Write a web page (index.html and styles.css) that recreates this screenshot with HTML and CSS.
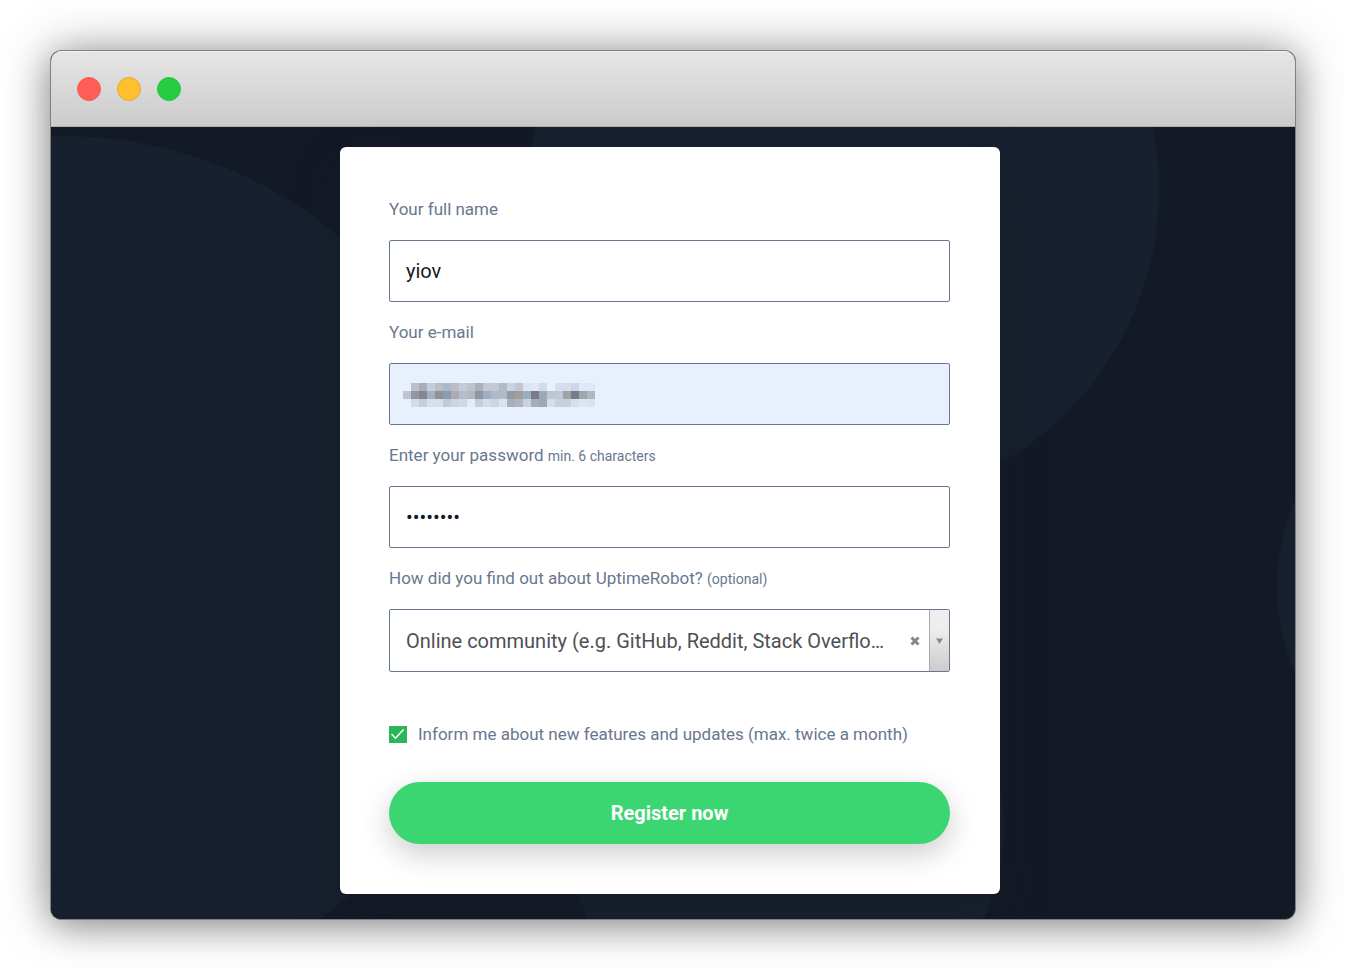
FILE: index.html
```html
<!DOCTYPE html>
<html lang="en">
<head>
<meta charset="utf-8">
<meta name="viewport" content="width=device-width, initial-scale=1">
<title>Register</title>
<link rel="stylesheet" href="styles.css">
</head>
<body>
<div class="window">
  <header class="titlebar">
    <button class="dot dot-close" type="button" aria-label="Close"></button>
    <button class="dot dot-minimize" type="button" aria-label="Minimize"></button>
    <button class="dot dot-zoom" type="button" aria-label="Zoom"></button>
  </header>
  <main class="page">
    <svg class="backdrop" viewBox="0 0 1244 792" preserveAspectRatio="xMidYMin slice" aria-hidden="true">
      <circle cx="11" cy="443" r="434"/>
      <circle cx="793" cy="63" r="315"/>
      <circle cx="1443" cy="460" r="217"/>
      <circle cx="735" cy="700" r="218"/>
    </svg>
    <form class="card">
      <div class="field">
        <label class="label" for="name">Your full name</label>
        <input class="input" id="name" type="text" value="yiov">
      </div>
      <div class="field">
        <label class="label" for="email">Your e-mail</label>
        <div class="control">
          <input class="input input-filled" id="email" type="email">
          <svg class="mosaic" viewBox="0 0 24 3" shape-rendering="crispEdges" aria-hidden="true"></svg>
        </div>
      </div>
      <div class="field">
        <label class="label" for="password">Enter your password <small class="hint">min. 6 characters</small></label>
        <input class="input" id="password" type="password" value="password">
      </div>
      <div class="field">
        <label class="label" for="source">How did you find out about UptimeRobot? <small class="hint">(optional)</small></label>
        <div class="control">
          <select class="input select" id="source">
            <option>Online community (e.g. GitHub, Reddit, Stack Overflow)</option>
          </select>
          <button class="clear" type="button" aria-label="Clear selection">
            <svg class="clear-icon" viewBox="0 0 10 10" aria-hidden="true"><path d="M1.5 1.5l7 7M8.500 1.500l-7 7"/></svg>
          </button>
          <span class="arrow"><svg class="arrow-icon" viewBox="0 0 8 6" aria-hidden="true"><path d="M0 0h8L4 6z"/></svg></span>
        </div>
      </div>
      <label class="consent">
        <input class="checkbox" type="checkbox" checked>
        <svg class="tick" viewBox="0 0 18 17" aria-hidden="true"><path d="M2.500 8l4 4.200L14.500 3.500"/></svg>
        <span>Inform me about new features and updates (max. twice a month)</span>
      </label>
      <button class="submit" type="submit">Register now</button>
    </form>
  </main>
</div>
<script src="mosaic.js"></script>
</body>
</html>
```

FILE: styles.css
```css
* {
  box-sizing: border-box;
}

body {
  margin: 0;
  padding: 50px;
  background: #fff;
  font-family: Roboto, "Liberation Sans", sans-serif;
}

.window {
  border: 1px solid #808080;
  border-radius: 11px;
  overflow: hidden;
  background: #131a25;
  box-shadow: 0 0 50px rgba(0, 0, 0, 0.34), 0 8px 32px rgba(0, 0, 0, 0.24);
}

.titlebar {
  display: flex;
  align-items: center;
  gap: 16px;
  height: 76px;
  padding: 1px 26px 0;
  border-bottom: 1px solid #aeb0af;
  background: linear-gradient(#e6e6e6, #cbcbcb);
  box-shadow: inset 0 1px #f2f2f2;
}

.dot {
  width: 24px;
  height: 24px;
  padding: 0;
  border: 1px solid;
  border-radius: 50%;
}

.dot-close {
  background: #ff5f57;
  border-color: #f45b54;
}

.dot-minimize {
  background: #ffc02f;
  border-color: #e5a730;
}

.dot-zoom {
  background: #27cd41;
  border-color: #2bc340;
}

.page {
  position: relative;
  padding: 20px 26px 25px 20px;
}

.backdrop {
  position: absolute;
  inset: 0;
  width: 100%;
  height: 100%;
  fill: #17202e;
}

.card {
  position: relative;
  display: flex;
  flex-direction: column;
  max-width: 660px;
  margin: 0 auto;
  padding: 50px 50px 50px 49px;
  border-radius: 6px;
  background: #fff;
  box-shadow: 0 20px 50px rgba(19, 26, 38, 0.3);
}

.field {
  display: flex;
  flex-direction: column;
  gap: 19px;
  margin-bottom: 18px;
}

.label,
.consent {
  color: #687790;
  font-size: 17px;
  line-height: 24px;
}

.hint {
  font-size: 14px;
  line-height: 1;
}

.control {
  position: relative;
  display: flex;
}

.input {
  width: 100%;
  height: 62px;
  padding: 0 16px;
  border: 1px solid #687790;
  border-radius: 2px;
  background: #fff;
  color: #131a26;
  font-family: inherit;
  font-size: 20px;
}

.input-filled {
  background: #e8effd;
}

.mosaic {
  position: absolute;
  top: 20px;
  left: 14px;
  width: 192px;
  height: 24px;
}

.select {
  height: 63px;
  padding: 0 62px 0 16px;
  appearance: none;
  color: #4f5054;
  text-overflow: ellipsis;
}

.clear {
  position: absolute;
  top: 1px;
  right: 21px;
  display: grid;
  place-items: center;
  width: 28px;
  height: 61px;
  padding: 0;
  border: 0;
  background: none;
}

.clear-icon {
  width: 10px;
  height: 10px;
  fill: none;
  stroke: #85868e;
  stroke-width: 3;
}

.arrow {
  position: absolute;
  top: 1px;
  right: 1px;
  display: grid;
  place-items: center;
  width: 20px;
  height: 61px;
  border-left: 1px solid #aaa;
  background: linear-gradient(#eee 30%, #ccc);
  pointer-events: none;
}

.arrow-icon {
  width: 7px;
  height: 6px;
  fill: #85868e;
}

.consent {
  position: relative;
  display: flex;
  align-items: center;
  gap: 11px;
  margin: 32px 0 36px;
}

.checkbox {
  width: 18px;
  height: 17px;
  margin: 0;
  appearance: none;
  background: #29b757;
}

.tick {
  position: absolute;
  left: 0;
  width: 18px;
  height: 17px;
  fill: none;
  stroke: #fff;
  stroke-width: 1.5;
  pointer-events: none;
}

.submit {
  height: 62px;
  padding: 0;
  border: 0;
  border-radius: 31px;
  background: #3bd671;
  color: #fff;
  font-family: inherit;
  font-size: 20px;
  font-weight: 700;
  box-shadow: 0 10px 30px rgba(0, 0, 0, 0.2);
}
```

FILE: mosaic.js
```js
// Pixelated cover for the private address, one colour per cell.
const rows = [
  "- bac1ca a8afb9 c5cdd8 b7bfcb adb9c5 b9bfca c3cbd8 bbc3ce a9b1bb c1c9d5 c1c9d5 b0bbc8 cbd2e0 bfc7d3 dbe5f4 dde7f6 d3dae9 - d6deed d6deed cfd6e6 dee8f8 dee8f8",
  "bfc4ce 92969f 84858f a2b1c1 938f99 899cb4 abadb6 b5bdc9 b5b7bb 8997a7 9dafc0 b1b9c4 b1b9c4 999a9e a09e9f 9aadc3 7b7b87 9ea9b5 c1c6ce bdc9d7 a1a3a6 777b90 9da5ad b1b7bf",
  "- d5dce9 c7ced9 d6deea d6deea c3cad7 ccd4e0 d1d8e5 e4ebf8 c5cdd9 d5dce9 cdd5e2 dbe3f1 a8b0ba b0b5be cbd2de a5adb9 9da8b5 d5dce9 c8cfdd c8cfdd d7dfec dce5f3 d9e2f0"
];
const mosaic = document.querySelector(".mosaic");
rows.forEach((row, y) => row.split(" ").forEach((colour, x) => {
  if (colour === "-") return;
  const cell = document.createElementNS("http://www.w3.org/2000/svg", "rect");
  cell.setAttribute("x", x);
  cell.setAttribute("y", y);
  cell.setAttribute("width", 1);
  cell.setAttribute("height", 1);
  cell.setAttribute("fill", "#" + colour);
  mosaic.append(cell);
}));
```
